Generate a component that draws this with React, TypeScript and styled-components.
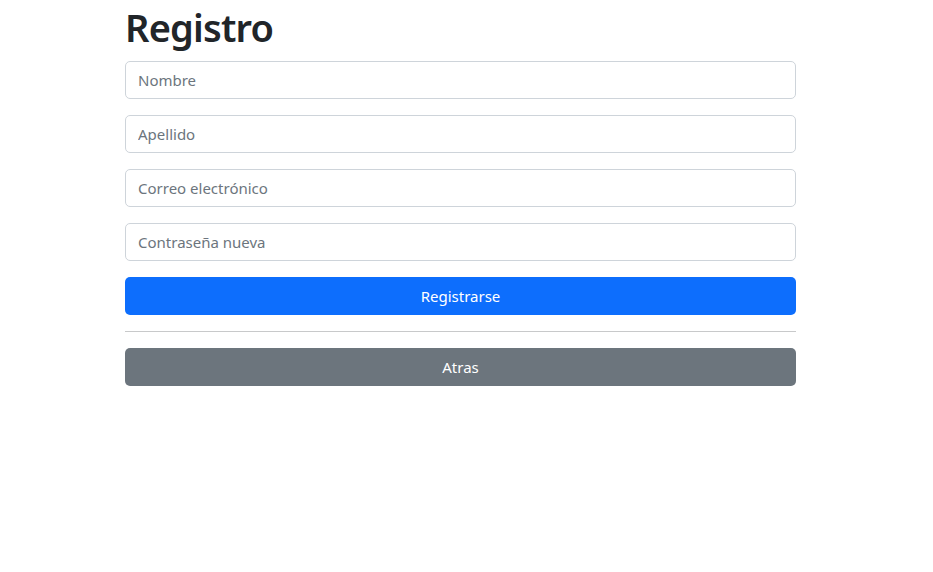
import React from "react";
import styled, { createGlobalStyle } from "styled-components";

const Global = createGlobalStyle`
  html, body { margin: 0; padding: 0; background: #fff; }
  body {
    font-family: "Noto Sans", "Open Sans", sans-serif;
    color: #212529;
    font-size: 16px;
    line-height: 1.5;
  }
  * { box-sizing: border-box; }
`;

const Page = styled.div`
  padding-left: 125px;
  width: 796px;
`;

const Title = styled.h1`
  margin: 0 0 8px;
  padding-top: 5px;
  height: 53px;
  font-size: 38px;
  font-weight: 560;
  line-height: 44px;
  letter-spacing: -0.8px;
`;

const Form = styled.form`
  display: flex;
  flex-direction: column;
  gap: 16px;
`;

const Input = styled.input`
  display: block;
  width: 100%;
  height: 38px;
  padding: 6px 12px;
  font-family: inherit;
  font-size: 15px;
  color: #212529;
  border: 1px solid #ced4da;
  border-radius: 5px;
  background: #fff;
  outline: none;
  &::placeholder { color: #6c757d; opacity: 1; }
`;

const Button = styled.button<{ $variant: "primary" | "secondary" }>`
  display: block;
  width: 100%;
  height: 38px;
  border: none;
  border-radius: 5px;
  font-family: inherit;
  font-size: 15px;
  color: #fff;
  background: ${(p) => (p.$variant === "primary" ? "#0d6efd" : "#6c757d")};
  cursor: pointer;
`;

const Rule = styled.hr`
  margin: 0;
  border: none;
  border-top: 1px solid #c8c9ca;
`;

export default function App() {
  return (
    <>
      <Global />
      <Page>
        <Title>Registro</Title>
        <Form onSubmit={(e) => e.preventDefault()}>
          <Input type="text" placeholder="Nombre" />
          <Input type="text" placeholder="Apellido" />
          <Input type="email" placeholder="Correo electrónico" />
          <Input type="password" placeholder="Contraseña nueva" />
          <Button type="submit" $variant="primary">Registrarse</Button>
          <Rule />
          <Button type="button" $variant="secondary">Atras</Button>
        </Form>
      </Page>
    </>
  );
}
